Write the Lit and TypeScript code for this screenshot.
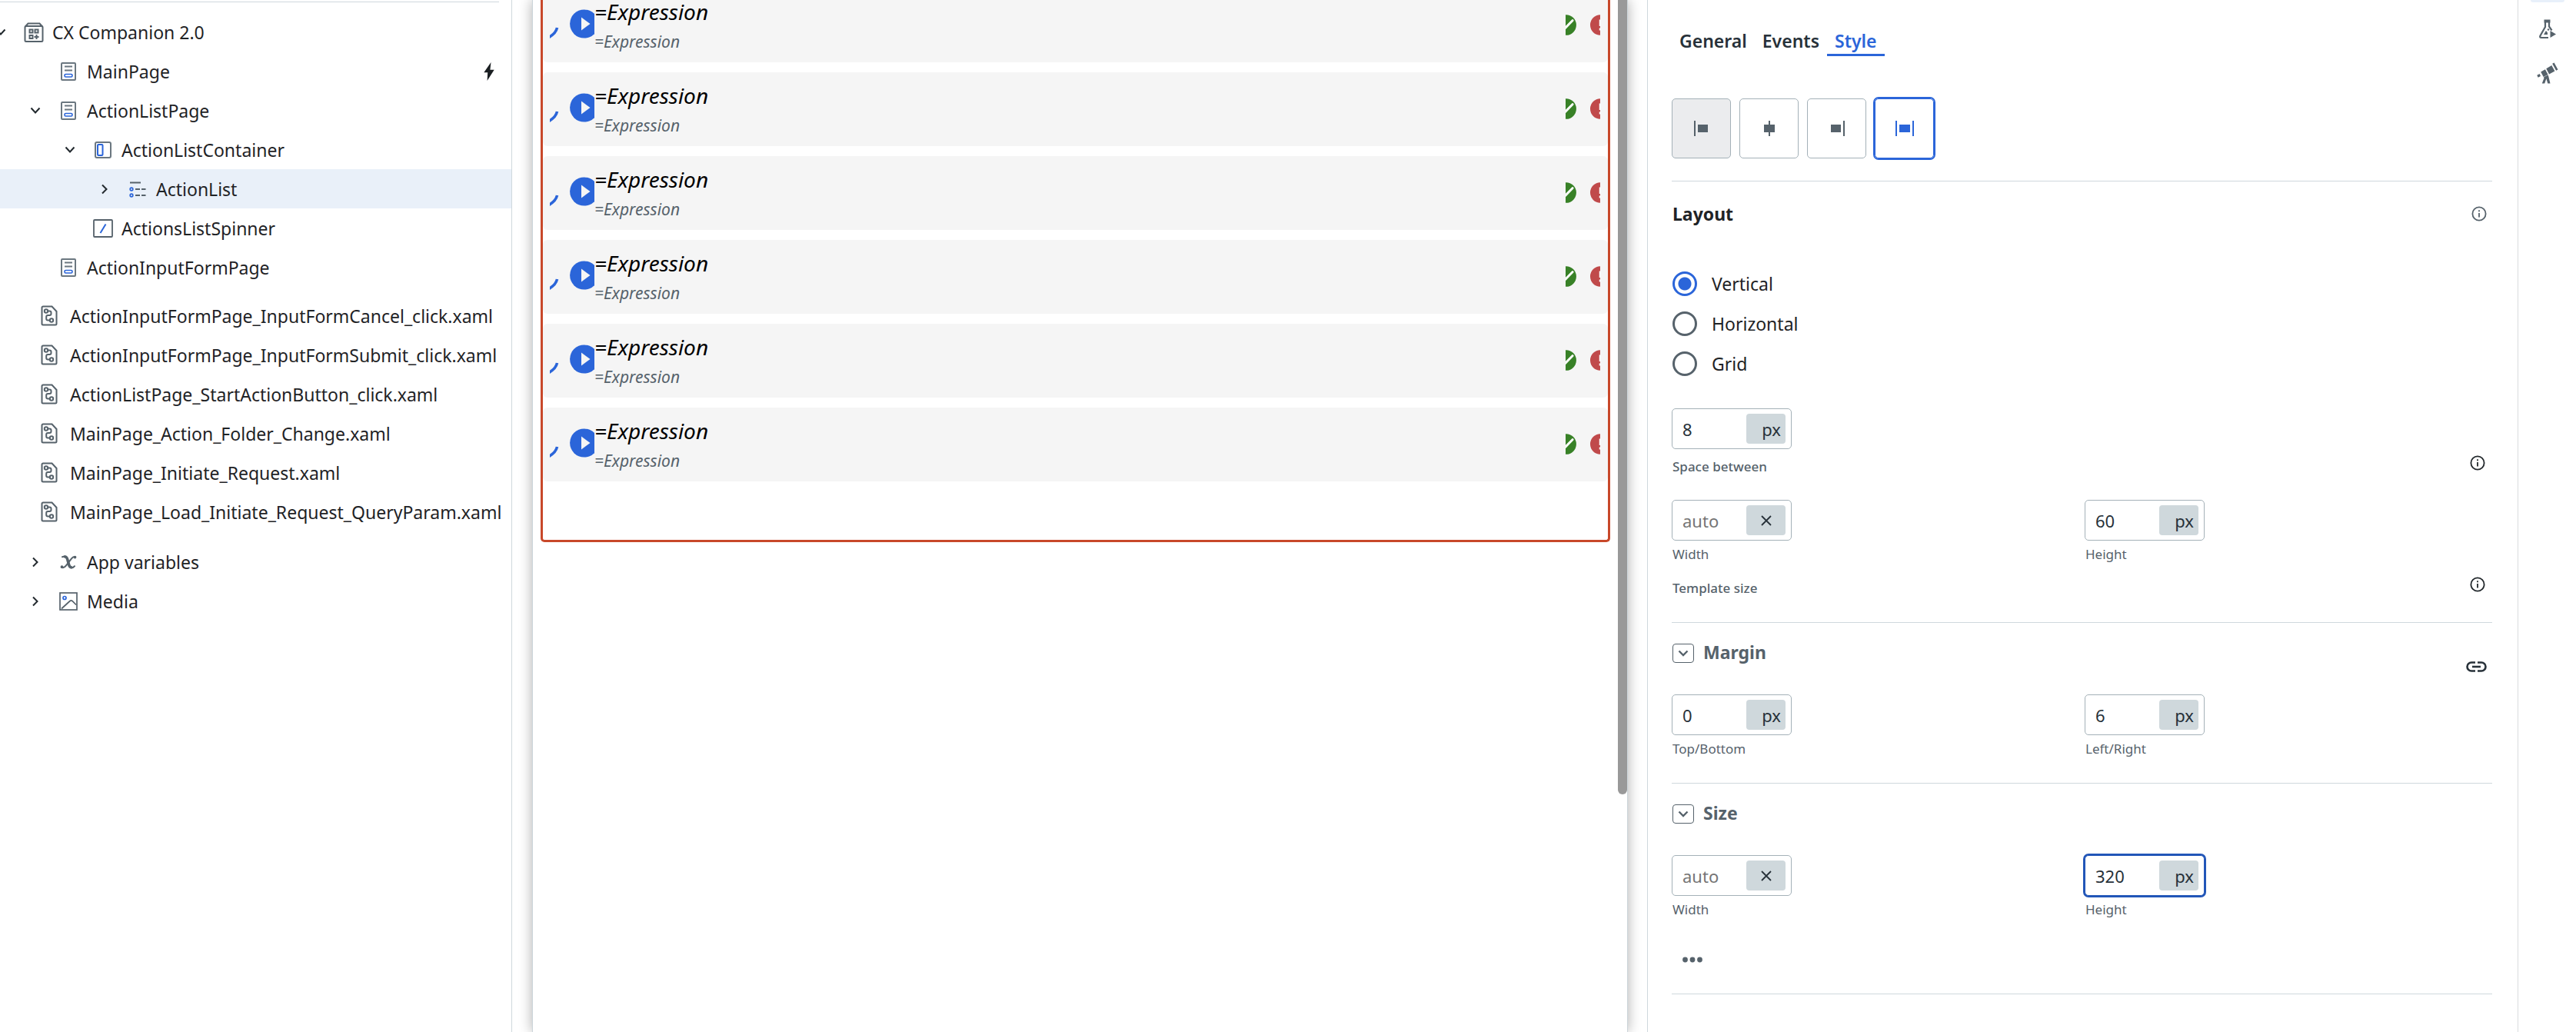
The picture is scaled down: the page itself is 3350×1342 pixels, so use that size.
import { LitElement, html, css, svg, nothing } from "lit";
import { customElement, property, state } from "lit/decorators.js";
import { classMap } from "lit/directives/class-map.js";
import { styleMap } from "lit/directives/style-map.js";

const icons = {
  down: svg`<svg width="14" height="10" viewBox="0 0 14 10" fill="none" stroke="#22292e" stroke-width="2"><path d="M1.5 1.5 7 7.5l5.500-6"/></svg>`,
  right: svg`<svg width="10" height="14" viewBox="0 0 10 14" fill="none" stroke="#22292e" stroke-width="2"><path d="M2 1.500 7.500 7 2 12.500"/></svg>`,
  app: svg`<svg width="26" height="26" viewBox="0 0 26 26" fill="none" stroke="#56626b" stroke-width="2"><rect x="1.500" y="5" width="23" height="20" rx="1.500"/><path d="M2 5.500 5.500 1.500h15L24 5.500"/><rect x="7.500" y="9.500" width="4" height="4"/><rect x="14.500" y="9.500" width="4" height="4"/><rect x="7.500" y="17" width="4" height="4"/><path d="M16.500 16v6M13.500 19h6"/></svg>`,
  page: svg`<svg width="20" height="24" viewBox="0 0 20 24" fill="none"><rect x="1" y="1" width="18" height="22" rx="1" stroke="#6b7780" stroke-width="2"/><path d="M5 5.500h10M5 10.500h10" stroke="#6b7780" stroke-width="2"/><rect x="5" y="15.500" width="10" height="3.500" rx="1.500" stroke="#2b65d9" stroke-width="1.600"/></svg>`,
  container: svg`<svg width="22" height="22" viewBox="0 0 22 22" fill="none"><rect x="1" y="1" width="20" height="20" rx="2" stroke="#6b7780" stroke-width="2"/><rect x="4" y="4" width="6.500" height="14" rx="1" stroke="#2b65d9" stroke-width="2"/></svg>`,
  list: svg`<svg width="22" height="22" viewBox="0 0 22 22" fill="none"><path d="M1 2.500h14M8 11h6M16 11h5.500M8 19h6M16 19h5.500" stroke="#56626b" stroke-width="1.800"/><circle cx="3" cy="11" r="1.800" stroke="#2b65d9" stroke-width="1.700"/><circle cx="3" cy="19" r="1.800" stroke="#2b65d9" stroke-width="1.700"/></svg>`,
  spinner: svg`<svg width="26" height="24" viewBox="0 0 26 24" fill="none"><rect x="1" y="1" width="24" height="22" rx="1" stroke="#56626b" stroke-width="1.800"/><path d="M16.500 6.500 9.500 18" stroke="#2b65d9" stroke-width="2"/></svg>`,
  flow: svg`<svg width="22" height="27" viewBox="0 0 22 27" fill="none" stroke="#56626b" stroke-width="2"><path d="M3 1.500h11.500L20.500 8v16a1.500 1.500 0 0 1-1.500 1.500H3A1.500 1.500 0 0 1 1.500 24V3A1.500 1.500 0 0 1 3 1.500Z"/><circle cx="7" cy="7.500" r="2.200"/><circle cx="14" cy="19.500" r="2.200"/><path d="M9.200 7.500h2.300a2 2 0 0 1 2 2v1.500a2 2 0 0 1-2 2H9.200a2 2 0 0 0-2 2v2.500a2 2 0 0 0 2 2h2.600"/></svg>`,
  variable: svg`<svg width="22" height="18" viewBox="0 0 22 18" fill="none" stroke="#56626b" stroke-linecap="round"><path d="M6.500 2c2 0 2.700 1.500 3.200 3.400l1.800 6.600c.6 2.200 1.300 3.700 3.200 3.700" stroke-width="3.600"/><path d="M20 2.300c-2-1-3.600.2-5 2L8 13.300c-1.500 2-3.700 3.500-5.700 2.400M3 2.200l3.500-1M15 16.400c1.800.1 3-.8 4-2.200" stroke-width="2"/><circle cx="19.500" cy="2.600" r="1" stroke-width="1.800"/><circle cx="2.500" cy="15.200" r="1" stroke-width="1.800"/></svg>`,
  media: svg`<svg width="24" height="24" viewBox="0 0 24 24" fill="none"><rect x="1" y="1" width="22" height="22" stroke="#56626b" stroke-width="1.700"/><circle cx="7" cy="7.500" r="2" stroke="#2b65d9" stroke-width="1.700"/><path d="M3 21.500 14 11.500q1.500-1.200 3 0l5 5" stroke="#56626b" stroke-width="1.700"/></svg>`,
  bolt: svg`<svg width="14" height="24" viewBox="0 0 14 24" fill="#1b1f22"><path d="M9.500 0 .300 13.200h4.900L4.600 24 13.700 9.700H8.400Z"/></svg>`,
};

const info = svg`<svg width="20" height="20" viewBox="0 0 20 20" fill="none"><circle cx="10" cy="10" r="8.600" stroke="currentColor" stroke-width="1.800"/><path d="M10 9v5.500M10 5.200v2" stroke="currentColor" stroke-width="1.800"/></svg>`;
const clear = svg`<svg width="14" height="14" viewBox="0 0 14 14" fill="none" stroke="#273139" stroke-width="1.800"><path d="m1 1 12 12M13 1 1 13"/></svg>`;
const link = svg`<svg width="27" height="14" viewBox="0 0 27 14" fill="none" stroke="#273139" stroke-width="2.600"><path d="M12 1.500H7a5.500 5.500 0 0 0 0 11h5M15 1.500h5a5.500 5.500 0 0 1 0 11h-5"/><path d="M8 7h11"/></svg>`;

interface Node {
  label: string;
  icon: keyof typeof icons;
  level: number;
  open?: boolean;
  leaf?: boolean;
  bolt?: boolean;
}

const NODES: Node[] = [
  { label: "CX Companion 2.0", icon: "app", level: 0, open: true },
  { label: "MainPage", icon: "page", level: 1, leaf: true, bolt: true },
  { label: "ActionListPage", icon: "page", level: 1, open: true },
  { label: "ActionListContainer", icon: "container", level: 2, open: true },
  { label: "ActionList", icon: "list", level: 3 },
  { label: "ActionsListSpinner", icon: "spinner", level: 2, leaf: true },
  { label: "ActionInputFormPage", icon: "page", level: 1, leaf: true },
];

const FILES = [
  "ActionInputFormPage_InputFormCancel_click.xaml",
  "ActionInputFormPage_InputFormSubmit_click.xaml",
  "ActionListPage_StartActionButton_click.xaml",
  "MainPage_Action_Folder_Change.xaml",
  "MainPage_Initiate_Request.xaml",
  "MainPage_Load_Initiate_Request_QueryParam.xaml",
];

const RESOURCES: Node[] = [
  { label: "App variables", icon: "variable", level: 1 },
  { label: "Media", icon: "media", level: 1 },
];

const base = css`
  * { box-sizing: border-box; }
  :host { display: block; font-family: "Noto Sans", "Liberation Sans", sans-serif; }
  button { font: inherit; color: inherit; background: none; border: 0; padding: 0; margin: 0; cursor: pointer; }
  ul { list-style: none; margin: 0; padding: 0; }
  svg { display: block; flex: none; }
`;

@customElement("app-tree")
export class AppTree extends LitElement {
  @state() private selected = "ActionList";

  static styles = [base, css`
    :host { border-right: 1px solid #cfd8dd; overflow: hidden; padding-top: 2px; color: #1f2326; font-size: 23px; }
    .rule { border-top: 1px solid #cfd8dd; margin: 0 16px 13px 0; }
    .row { display: flex; align-items: center; height: 51px; padding-right: 22px; }
    .row.selected { background: #e9f0f9; }
    .indent { flex: none; }
    .toggle { width: 24px; height: 24px; margin: 0 15px 0 -11px; display: grid; place-items: center; flex: none; }
    .icon { width: 32px; margin-right: 8px; display: grid; place-items: center; flex: none; }
    .name { flex: 1; text-align: left; white-space: nowrap; line-height: 30px; }
    .group { margin-top: 12px; }
    .group.last { margin-top: 14px; }
    .file { padding-left: 48px; padding-right: 0; }
    .file .icon { margin-right: 11px; }
  `];

  private row(n: Node) {
    return html`<li class=${classMap({ row: true, selected: n.label === this.selected })}>
      <span class="indent" style=${styleMap({ width: `${n.level * 45}px` })}></span>
      ${n.leaf
        ? html`<span class="toggle"></span>`
        : html`<button class="toggle" aria-label="Toggle ${n.label}" aria-expanded=${n.open ? "true" : "false"}>${n.open ? icons.down : icons.right}</button>`}
      <span class="icon">${icons[n.icon]}</span>
      <button class="name" @click=${() => (this.selected = n.label)}>${n.label}</button>
      ${n.bolt ? icons.bolt : nothing}
    </li>`;
  }

  render() {
    return html`
      <div class="rule"></div>
      <ul>${NODES.map((n) => this.row(n))}</ul>
      <ul class="group">
        ${FILES.map((f) => html`<li class="row file"><span class="icon">${icons.flow}</span><button class="name">${f}</button></li>`)}
      </ul>
      <ul class="group last">${RESOURCES.map((n) => this.row(n))}</ul>
    `;
  }
}

@customElement("app-canvas")
export class AppCanvas extends LitElement {
  static styles = [base, css`
    :host { padding: 0 25px 0 26px; overflow: hidden; }
    .sheet { position: relative; height: 100%; border: 0 solid #ccd5da; border-width: 0 1px; box-shadow: 0 0 16px rgba(0, 0, 0, .32); background: #fff; padding: 0 22px 0 10px; }
    .thumb { position: absolute; right: 0; top: 0; width: 12px; height: 77%; background: #999; border-radius: 0 0 6px 6px; }
    .frame { border: 3px solid #c8482a; border-top: 0; border-radius: 0 0 5px 5px; padding-bottom: 76px; overflow: hidden; }
    .cards { display: flex; flex-direction: column; gap: 13px; margin-top: -15px; }
    .card { height: 96px; border-radius: 6px; background: #f5f5f5; display: flex; align-items: flex-start; padding: 0 10px 0 9px; }
    .spin { margin-right: 14px; padding-top: 48px; }
    .play { padding-top: 27px; }
    .text { flex: 1; font-style: italic; padding-top: 17px; }
    .title { margin: 0; font-size: 28px; font-weight: 400; line-height: 26px; color: #000; }
    .sub { margin: 11px 0 0; font-size: 21px; line-height: 30px; color: #56626b; }
    .mark { padding-top: 34px; margin-left: 18px; }
  `];

  render() {
    return html`<div class="sheet">
      <div class="frame">
        <ul class="cards">
          ${Array.from({ length: 6 }, () => html`<li class="card">
            <svg class="spin" width="12" height="66" viewBox="0 0 12 18"><path d="M9.500 3Q8 10.500-2 16" fill="none" stroke="#2b65d9" stroke-width="3.600"/></svg>
            <button class="play" aria-label="Start action"><svg width="32" height="38" viewBox="0 0 32 38"><circle cx="18.700" cy="19" r="18.600" fill="#2b65d9"/><path d="M15 10.500v17l11.500-8.500Z" fill="#f5f5f5"/></svg></button>
            <div class="text"><h3 class="title">=Expression</h3><p class="sub">=Expression</p></div>
            <div class="mark"><svg width="14" height="27" viewBox="0 0 14 27"><circle cx=".600" cy="13.500" r="13.300" fill="#388127"/><path d="M-1 18 9 7.700" stroke="#fff" stroke-width="3" stroke-linecap="round"/></svg></div>
            <div class="mark"><svg width="13" height="27" viewBox="0 0 13 27"><circle cx="13.300" cy="13.500" r="13.300" fill="#c04a4b"/><path d="M13 6.500v8.500M13 17.500v3" stroke="#fff" stroke-width="2.500"/></svg></div>
          </li>`)}
        </ul>
      </div>
      <div class="thumb"></div>
    </div>`;
  }
}

@customElement("size-field")
export class SizeField extends LitElement {
  @property() label = "";
  @property() value = "";
  @property({ type: Boolean }) active = false;

  static styles = [base, css`
    .box { display: flex; align-items: center; width: 156px; height: 53px; padding: 0 7px 0 13px; border: 1px solid #a4b1b8; border-radius: 5px; background: #fff; }
    .box.active { border-color: #2256b8; box-shadow: 0 0 0 2px #2256b8; }
    .input { flex: 1; min-width: 0; height: 39px; border: 0; outline: 0; padding: 0; background: none; font: 22px "Noto Sans", "Liberation Sans", sans-serif; color: #273139; }
    .input::placeholder { color: #757575; opacity: 1; }
    .unit { width: 51px; height: 39px; border-radius: 4px; background: #cfd8dc; color: #273139; font-size: 22px; line-height: 30px; padding-right: 6px; text-align: right; }
    .unit.none { display: grid; place-items: center; padding: 0; }
    .label { display: block; margin-top: 6px; padding-left: 1px; font-size: 17px; line-height: 24px; color: #56626b; }
  `];

  render() {
    return html`
      <div class=${classMap({ box: true, active: this.active })}>
        <input class="input" id="value" placeholder="auto" aria-label=${this.label || "Space between"} .value=${this.value} />
        ${this.value
          ? html`<button class="unit" aria-label="Unit px">px</button>`
          : html`<button class="unit none" aria-label="Unit auto">${clear}</button>`}
      </div>
      ${this.label ? html`<label class="label" for="value">${this.label}</label>` : nothing}
    `;
  }
}

@customElement("app-properties")
export class AppProperties extends LitElement {
  @state() private layout = "Vertical";

  static styles = [base, css`
    :host { border-left: 1px solid #cfd8dd; padding: 37px 33px 0 31px; color: #1f2326; }
    .tabs { display: flex; }
    .tab { font-size: 23px; font-weight: 600; line-height: 32px; color: #273139; padding: 0 10px 1px; border-bottom: 3px solid transparent; }
    .tab.on { color: #2b65d9; border-color: #2b65d9; }
    .aligns { display: flex; gap: 11px; margin-top: 55px; }
    .align { width: 77px; height: 78px; border: 1px solid #a4b1b8; border-radius: 5px; display: grid; place-items: center; color: #56626b; }
    .align.hover { background: #ebecee; }
    .align.on { color: #2b65d9; border-color: #2b65d9; box-shadow: 0 0 0 2px #2b65d9; }
    .divider { border: 0; border-top: 1px solid #cfd8dd; margin: 0; }
    .divider.first { margin-top: 29px; }
    .divider.next { margin-top: 32px; }
    .divider.last { margin-top: 28px; }
    .head { display: flex; align-items: center; justify-content: space-between; margin-top: 26px; }
    .h { margin: 0; padding-left: 1px; font-size: 23px; font-weight: 700; line-height: 32px; }
    .info { margin-right: 9px; color: #22282c; }
    .head .info { color: #56626b; margin-right: 7px; }
    .radios { display: flex; flex-direction: column; gap: 20px; margin-top: 59px; }
    .radio { display: flex; align-items: center; gap: 19px; height: 32px; padding-left: 1px; font-size: 23px; line-height: 30px; }
    .dot { appearance: none; width: 32px; height: 32px; margin: 0; border: 3px solid #56626b; border-radius: 50%; background: #fff; }
    .dot:checked { border-color: #2b65d9; background: radial-gradient(circle, #2b65d9 8px, #fff 9px); }
    .space { margin-top: 42px; }
    .note { display: flex; justify-content: space-between; align-items: flex-start; margin-top: 8px; }
    .note.after { margin-top: 17px; }
    .cap { padding: 3px 0 0 1px; font-size: 17px; font-weight: 500; line-height: 24px; color: #56626b; }
    .pair { display: grid; grid-template-columns: 1fr 1fr; gap: 7px; margin-top: 20px; }
    .pair.far { margin-top: 31px; }
    .sub { display: flex; align-items: flex-start; height: 51px; margin-top: 22px; color: #56626b; }
    .sub .h { flex: 1; padding-left: 12px; }
    .fold { width: 28px; height: 25px; margin: 5px 0 0 1px; border: 1px solid #56626b; border-radius: 4px; display: grid; place-items: center; }
    .link { align-self: flex-end; height: 32px; margin-right: 7px; display: grid; place-items: center; }
    .more { display: flex; align-items: center; justify-content: center; width: 54px; height: 32px; margin-top: 37px; }
  `];

  private glyph(kind: string) {
    const parts: Record<string, unknown> = {
      left: svg`<path d="M2 0h2v20H2zM7 5h13v10H7z"/>`,
      center: svg`<path d="M11 0h2v20h-2zM5 5h14v10H5z"/>`,
      right: svg`<path d="M20 0h2v20h-2zM4 5h13v10H4z"/>`,
      stretch: svg`<path d="M0 0h2v20H0zM22 0h2v20h-2zM5 5h14v10H5z"/>`,
    };
    return html`<svg width="24" height="20" viewBox="0 0 24 20" fill="currentColor">${parts[kind]}</svg>`;
  }

  private section(title: string, linked: boolean) {
    return html`<div class="sub">
      <button class="fold" aria-label="Collapse ${title}"><svg width="14" height="9" viewBox="0 0 14 9" fill="none" stroke="#56626b" stroke-width="2.400"><path d="m1.500 1.500 5.500 5.500 5.500-5.500"/></svg></button>
      <h2 class="h">${title}</h2>
      ${linked ? html`<button class="link" aria-label="Link margins">${link}</button>` : nothing}
    </div>`;
  }

  render() {
    return html`
      <div class="tabs" role="tablist">
        ${["General", "Events", "Style"].map((t) => html`<button role="tab" aria-selected=${t === "Style" ? "true" : "false"} class=${classMap({ tab: true, on: t === "Style" })}>${t}</button>`)}
      </div>
      <div class="aligns">
        ${["left", "center", "right", "stretch"].map((a) => html`<button aria-label="Align ${a}" class=${classMap({ align: true, hover: a === "left", on: a === "stretch" })}>${this.glyph(a)}</button>`)}
      </div>
      <hr class="divider first" />
      <div class="head"><h2 class="h">Layout</h2><button class="info" aria-label="About layout">${info}</button></div>
      <div class="radios">
        ${["Vertical", "Horizontal", "Grid"].map((r) => html`<label class="radio"><input class="dot" type="radio" name="layout" .checked=${r === this.layout} @change=${() => (this.layout = r)} />${r}</label>`)}
      </div>
      <size-field class="space" value="8"></size-field>
      <div class="note"><span class="cap">Space between</span><button class="info" aria-label="About space between">${info}</button></div>
      <div class="pair far"><size-field label="Width"></size-field><size-field label="Height" value="60"></size-field></div>
      <div class="note after"><span class="cap">Template size</span><button class="info" aria-label="About template size">${info}</button></div>
      <hr class="divider next" />
      ${this.section("Margin", true)}
      <div class="pair"><size-field label="Top/Bottom" value="0"></size-field><size-field label="Left/Right" value="6"></size-field></div>
      <hr class="divider next" />
      ${this.section("Size", false)}
      <div class="pair"><size-field label="Width"></size-field><size-field label="Height" value="320" active></size-field></div>
      <button class="more" aria-label="More options"><svg width="26" height="8" viewBox="0 0 26 8" fill="#56626b"><circle cx="3.500" cy="4" r="3.400"/><circle cx="13" cy="4" r="3.400"/><circle cx="22.500" cy="4" r="3.400"/></svg></button>
      <hr class="divider last" />
    `;
  }
}

@customElement("app-rail")
export class AppRail extends LitElement {
  static styles = [base, css`
    :host { border-left: 1px solid #d9dddf; display: flex; flex-direction: column; align-items: center; }
    .current { width: 44px; height: 3px; background: #e8f0fa; border-radius: 0 0 5px 5px; }
    .tool { width: 44px; height: 44px; margin-top: 13px; display: grid; place-items: center; color: #56626b; }
  `];

  render() {
    return html`
      <div class="current"></div>
      <button class="tool" aria-label="Test"><svg width="24" height="26" viewBox="0 0 24 26" fill="none" stroke="currentColor"><path d="M7.500 2.500h8" stroke-width="4"/><path d="M9 4v6L2.500 21.500q-1 2.500 1.500 2.500h9M14 4v5.500l3.500 5" stroke-width="2.200"/><path d="M7 20l3-5 2 2.500V20Z" fill="currentColor" stroke="none"/><circle cx="13" cy="13.500" r="1.200" fill="currentColor" stroke="none"/><path d="M15.500 15v9l7.500-4.500Z" fill="currentColor" stroke="none"/></svg></button>
      <button class="tool" aria-label="Explore"><svg width="28" height="28" viewBox="0 0 28 28" fill="currentColor"><path d="m20.200 1.800 2.400-1.300 4.900 9-2.400 1.300ZM12.300 8.300l7-4.200 4.100 7.300-7.300 4ZM5.200 12.600l5.700-3.400 3.700 6.800-5.900 3.100ZM.3 16.800l3.400-1.700 1.300 2.800-3.300 1.800ZM9 19.300l5.600-2.800.6 1.500L17.500 27.500h-3.200l-1.900-6.200-2.200 6.200H6.800l2.700-7Z"/></svg></button>
    `;
  }
}

@customElement("app-root")
export class AppRoot extends LitElement {
  static styles = css`
    :host { display: block; background: #fff; }
    .shell { display: grid; grid-template-columns: 666px minmax(0, 1fr) 1132px 76px; min-height: 100vh; }
  `;

  render() {
    return html`<main class="shell"><app-tree></app-tree><app-canvas></app-canvas><app-properties></app-properties><app-rail></app-rail></main>`;
  }
}
